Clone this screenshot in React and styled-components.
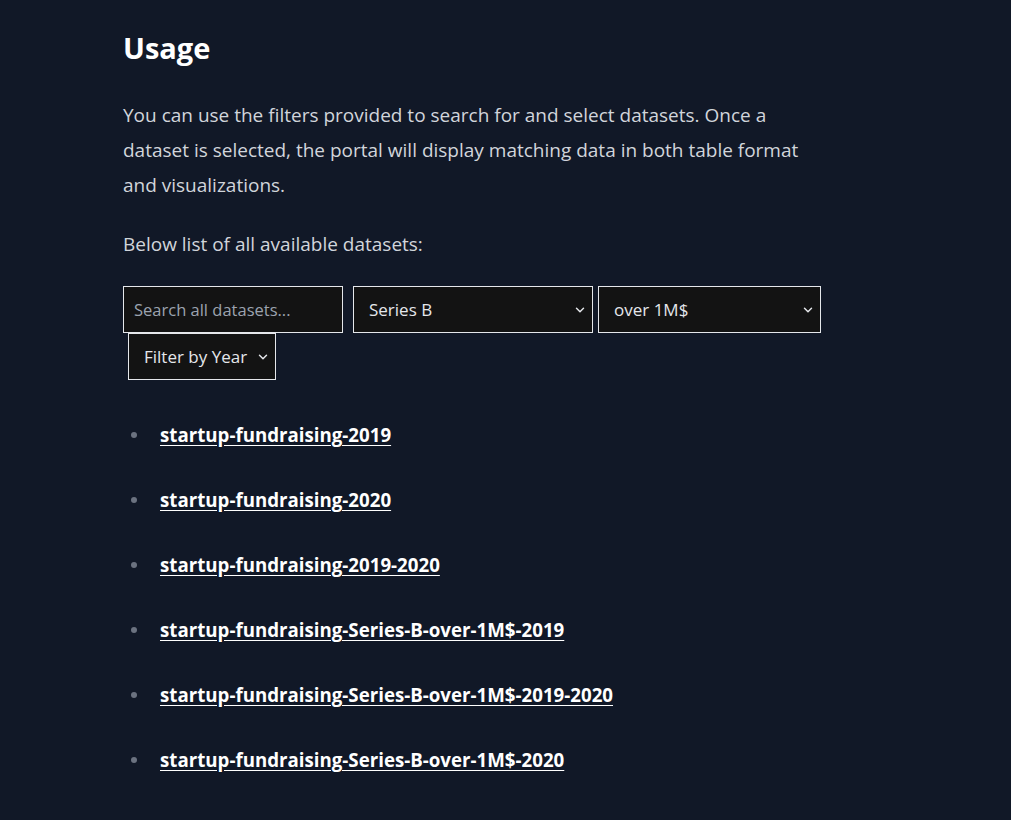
import React from "react";
import styled, { createGlobalStyle } from "styled-components";

const datasets = [
  "startup-fundraising-2019",
  "startup-fundraising-2020",
  "startup-fundraising-2019-2020",
  "startup-fundraising-Series-B-over-1M$-2019",
  "startup-fundraising-Series-B-over-1M$-2019-2020",
  "startup-fundraising-Series-B-over-1M$-2020",
];

const Global = createGlobalStyle`
  html, body {
    margin: 0;
    background: #111827;
  }
  body {
    font-family: "Open Sans", "Noto Sans", sans-serif;
    color: #d1d5db;
  }
`;

const Page = styled.main`
  min-height: 820px;
  padding: 28px 0 0 123px;
  box-sizing: border-box;
`;

const Content = styled.section`
  width: 690px;
  font-size: 19px;
  line-height: 35px;
`;

const Heading = styled.h2`
  margin: 0 0 30px;
  font-size: 29px;
  line-height: 40px;
  font-weight: 700;
  color: #fff;
`;

const Para = styled.p`
  margin: 0 0 24px;
`;

const Filters = styled.div`
  display: flex;
  flex-wrap: wrap;
  align-items: flex-start;
  width: 720px;
`;

const SearchInput = styled.input`
  width: 220px;
  height: 47px;
  box-sizing: border-box;
  margin-right: 10px;
  padding: 0 10px;
  background: #131313;
  border: 1px solid #e5e7eb;
  color: #e5e7eb;
  font: inherit;
  font-size: 16.5px;
  outline: none;
  &::placeholder {
    color: #9ca3af;
  }
`;

const SelectWrap = styled.div`
  position: relative;
  margin-left: ${(p) => p.$ml || 0}px;
  margin-right: ${(p) => p.$mr || 0}px;
`;

const Select = styled.select`
  appearance: none;
  width: ${(p) => p.$w}px;
  height: 47px;
  box-sizing: border-box;
  padding: 0 26px 0 15px;
  background: #131313;
  border: 1px solid #e5e7eb;
  border-radius: 0;
  color: #e5e7eb;
  font: inherit;
  font-size: 17px;
  outline: none;
`;

const Chevron = styled.svg`
  position: absolute;
  right: 6px;
  top: 17px;
  width: 14px;
  height: 14px;
  pointer-events: none;
`;

const List = styled.ul`
  margin: 37px 0 0;
  padding: 0 0 0 37px;
  list-style: none;
`;

const Item = styled.li`
  position: relative;
  margin-bottom: 30px;
  font-size: 18.7px;
  &::before {
    content: "";
    position: absolute;
    left: -29px;
    top: 15px;
    width: 6px;
    height: 6px;
    border-radius: 50%;
    background: #6b7280;
  }
`;

const DataLink = styled.a`
  color: #fff;
  font-weight: 700;
  text-decoration: underline;
  text-underline-offset: 3px;
`;

const Dropdown = ({ width, value, ml, mr }) => (
  <SelectWrap $ml={ml} $mr={mr}>
    <Select $w={width} defaultValue={value}>
      <option>{value}</option>
    </Select>
    <Chevron viewBox="0 0 24 24" fill="none" stroke="#e5e7eb" strokeWidth="2.5" strokeLinecap="round" strokeLinejoin="round">
      <path d="M6 9l6 6 6-6" />
    </Chevron>
  </SelectWrap>
);

export default function App() {
  return (
    <Page>
      <Global />
      <Content>
        <Heading>Usage</Heading>
        <Para>
          You can use the filters provided to search for and select datasets. Once a dataset is selected,
          the portal will display matching data in both table format and visualizations.
        </Para>
        <Para>Below list of all available datasets:</Para>
        <Filters>
          <SearchInput placeholder="Search all datasets..." />
          <Dropdown width={240} value="Series B" mr={5} />
          <Dropdown width={223} value="over 1M$" />
          <Dropdown width={148} value="Filter by Year" ml={5} />
        </Filters>
        <List>
          {datasets.map((d) => (
            <Item key={d}>
              <DataLink href="#">{d}</DataLink>
            </Item>
          ))}
        </List>
      </Content>
    </Page>
  );
}
